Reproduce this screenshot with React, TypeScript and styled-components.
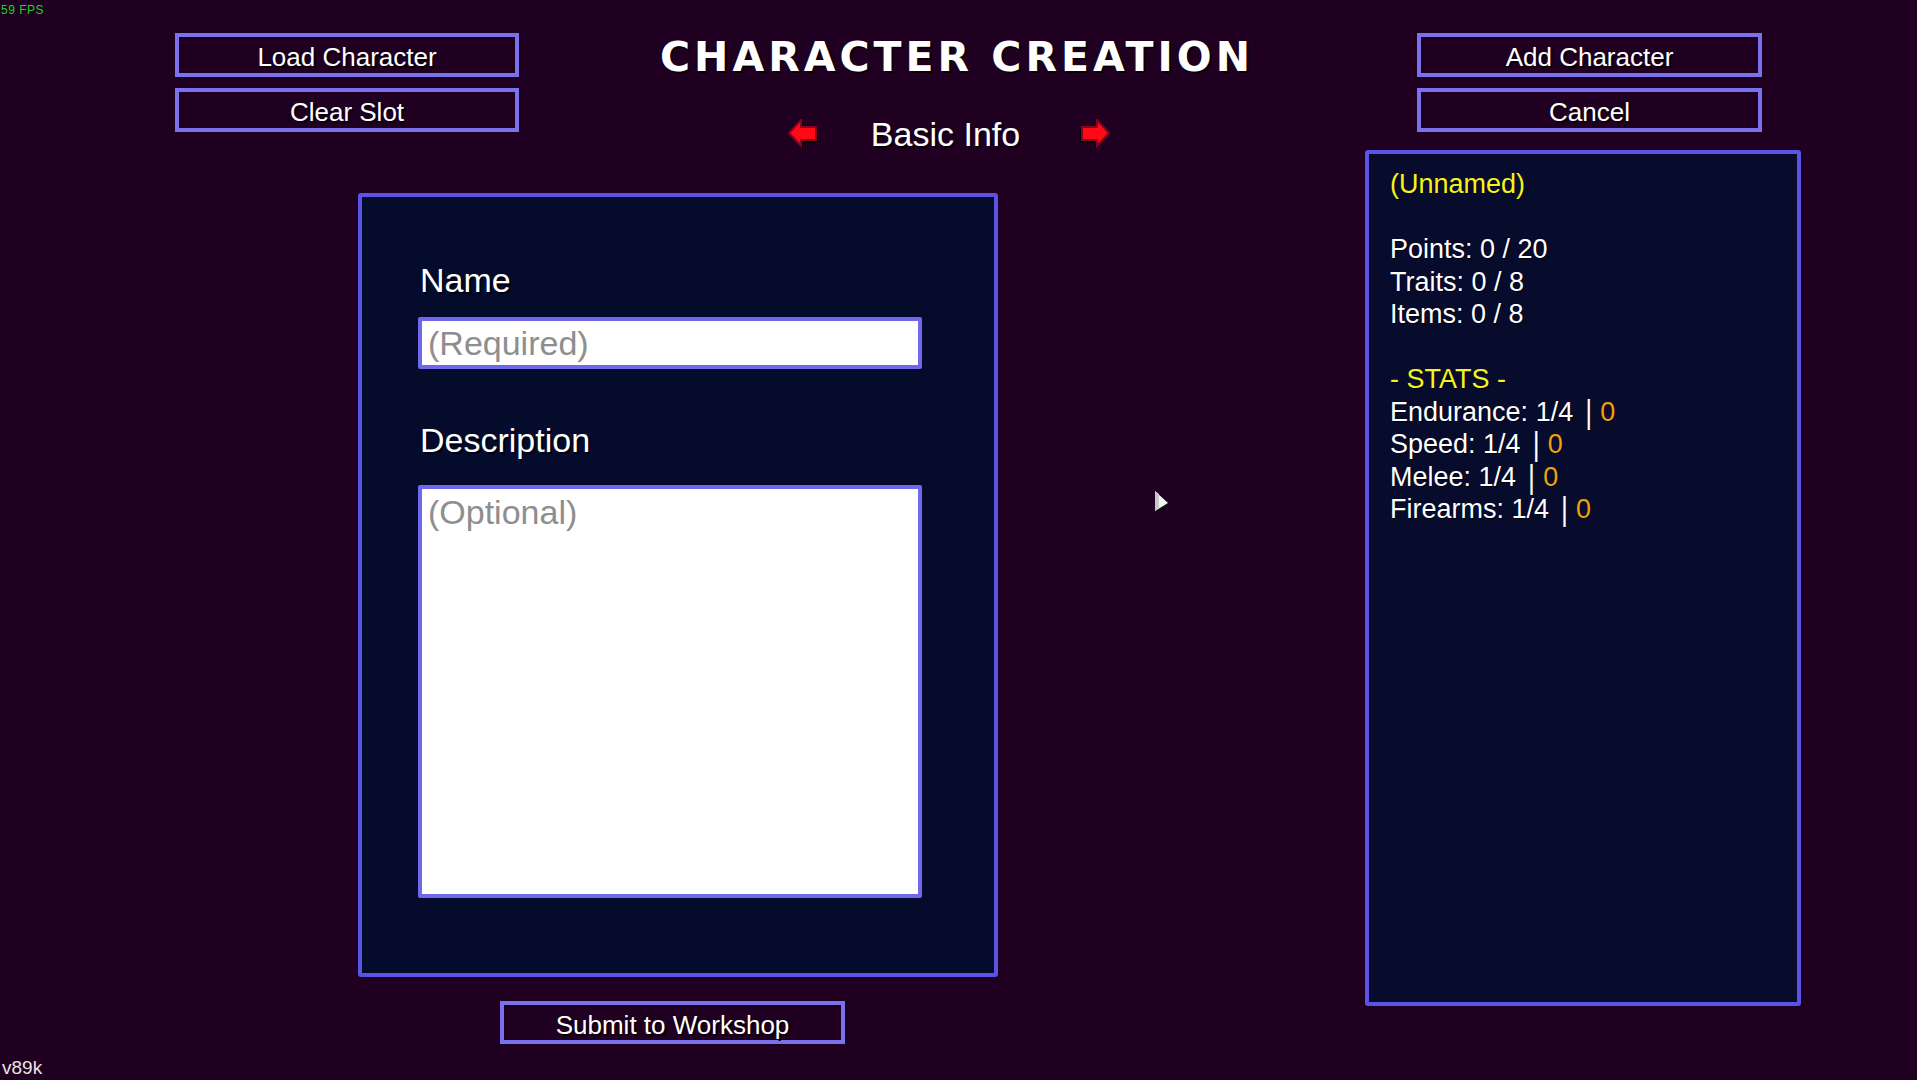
import React from "react";
import styled, { createGlobalStyle } from "styled-components";

const GlobalStyle = createGlobalStyle`
  html, body {
    margin: 0;
    padding: 0;
    background: #1f0020;
  }
  body {
    font-family: "Liberation Sans", Arial, sans-serif;
    color: #ffffff;
  }
  * {
    box-sizing: border-box;
  }
`;

const Screen = styled.div`
  position: relative;
  width: 1917px;
  height: 1080px;
  overflow: hidden;
  background: #1f0020;
  padding-top: 33px;
  display: flex;
  flex-direction: column;
`;

const Header = styled.header`
  display: grid;
  grid-template-columns: 344px 1fr 345px;
  height: 117px;
  padding: 0 155px 0 175px;
`;

const ButtonStack = styled.div`
  display: flex;
  flex-direction: column;
  gap: 11px;
`;

const PixelButton = styled.button<{ $width?: number }>`
  width: ${({ $width }) => ($width ? `${$width}px` : "100%")};
  height: ${({ $width }) => ($width ? "43px" : "44px")};
  padding: 4px 0 0;
  background: transparent;
  border: 4px solid #7a72ec;
  color: #ffffff;
  font-family: "Liberation Sans", Arial, sans-serif;
  font-size: 26px;
  line-height: 1;
  text-shadow: 2px 2px 0 #0a0008;
  cursor: pointer;
`;

const TitleColumn = styled.div`
  display: flex;
  flex-direction: column;
  align-items: center;
  padding-right: 22px;
`;

const Title = styled.h1`
  margin: 4px 0 0;
  font-family: "DejaVu Sans", "Liberation Sans", sans-serif;
  font-weight: bold;
  font-size: 41px;
  line-height: 41px;
  letter-spacing: 4px;
  color: #ffffff;
  text-shadow: 2px 2px 0 #0a0008;
  white-space: nowrap;
`;

const PageSwitcher = styled.div`
  display: flex;
  align-items: center;
  margin: 39px 16px 0 0;
`;

const PageName = styled.span`
  font-size: 34px;
  line-height: 34px;
  margin: 0 59px 0 52px;
  text-shadow: 2px 2px 0 #0a0008;
`;

const ArrowButton = styled.button`
  width: 31px;
  height: 30px;
  padding: 0;
  border: none;
  background: transparent;
  display: flex;
  cursor: pointer;
`;

const Body = styled.main`
  display: flex;
  align-items: flex-start;
  padding-left: 358px;
  padding-right: 116px;
`;

const EditorColumn = styled.div`
  display: flex;
  flex-direction: column;
  padding-top: 43px;
`;

const EditorPanel = styled.section`
  width: 640px;
  height: 784px;
  padding: 63px 56px 0;
  background: #050c2b;
  border: 4px solid #5b52e6;
  border-radius: 3px;
  display: flex;
  flex-direction: column;
`;

const FieldLabel = styled.label<{ $gap?: number }>`
  display: block;
  margin-top: ${({ $gap }) => $gap ?? 0}px;
  padding-left: 2px;
  font-size: 34px;
  line-height: 40px;
  color: #ffffff;
  text-shadow: 2px 2px 0 #000010;
`;

const fieldStyles = `
  width: 504px;
  background: #ffffff;
  border: 4px solid #6f68ea;
  border-radius: 2px;
  color: #202020;
  font-family: "Liberation Sans", Arial, sans-serif;
  font-size: 34px;
  outline: none;
  &::placeholder {
    color: #8e8e8e;
  }
`;

const NameInput = styled.input`
  ${fieldStyles}
  height: 52px;
  margin-top: 17px;
  padding: 0 6px;
`;

const DescriptionInput = styled.textarea`
  ${fieldStyles}
  height: 413px;
  margin-top: 25px;
  padding: 3px 6px;
  line-height: 40px;
  resize: none;
`;

const SubmitRow = styled.div`
  margin: 24px 0 0 142px;
`;

const SummaryPanel = styled.aside`
  margin-left: auto;
  width: 436px;
  height: 856px;
  padding: 14px 21px;
  background: #070c2d;
  border: 4px solid #5b52e6;
  border-radius: 3px;
  font-size: 27px;
  line-height: 32.5px;
`;

const SummaryLine = styled.div<{ $tone?: "yellow" | "white" }>`
  height: 32.5px;
  white-space: pre;
  color: ${({ $tone }) => ($tone === "yellow" ? "#f6f31c" : "#ffffff")};
  text-shadow: 1px 1px 0 #000010;
`;

const StatValue = styled.span`
  color: #f0a010;
`;

const Separator = styled.span`
  display: inline-block;
  transform: scaleY(1.25);
  margin: 0 8px 0 12px;
`;

const FpsCounter = styled.div`
  position: absolute;
  top: 3px;
  left: 1px;
  font-size: 12px;
  letter-spacing: 0.5px;
  color: #22d022;
`;

const VersionTag = styled.div`
  position: absolute;
  left: 2px;
  bottom: 3px;
  font-size: 19px;
  line-height: 19px;
  color: #e4e4e4;
`;

const Pointer = styled.svg`
  position: absolute;
  left: 1154px;
  top: 490px;
`;

const Arrow: React.FC<{ dir: "left" | "right" }> = ({ dir }) => (
  <svg width="31" height="30" viewBox="0 0 31 30">
    <g transform={dir === "right" ? "translate(31 0) scale(-1 1)" : undefined}>
      <polygon
        points="3,16 15,3 15,10 30,10 30,24 15,24 15,30"
        fill="#05000a"
      />
      <polygon
        points="1,14 13,1 13,8 28,8 28,21 13,21 13,27"
        fill="#ff0a14"
        stroke="#8a0020"
        strokeWidth="2"
        strokeLinejoin="miter"
      />
    </g>
  </svg>
);

const stats = [
  { name: "Endurance", value: "1/4", bonus: 0 },
  { name: "Speed", value: "1/4", bonus: 0 },
  { name: "Melee", value: "1/4", bonus: 0 },
  { name: "Firearms", value: "1/4", bonus: 0 },
];

export default function App() {
  return (
    <>
      <GlobalStyle />
      <Screen>
        <FpsCounter>59 FPS</FpsCounter>

        <Header>
          <ButtonStack>
            <PixelButton>Load Character</PixelButton>
            <PixelButton>Clear Slot</PixelButton>
          </ButtonStack>

          <TitleColumn>
            <Title>CHARACTER CREATION</Title>
            <PageSwitcher>
              <ArrowButton aria-label="Previous page">
                <Arrow dir="left" />
              </ArrowButton>
              <PageName>Basic Info</PageName>
              <ArrowButton aria-label="Next page">
                <Arrow dir="right" />
              </ArrowButton>
            </PageSwitcher>
          </TitleColumn>

          <ButtonStack>
            <PixelButton>Add Character</PixelButton>
            <PixelButton>Cancel</PixelButton>
          </ButtonStack>
        </Header>

        <Body>
          <EditorColumn>
            <EditorPanel>
              <FieldLabel htmlFor="char-name">Name</FieldLabel>
              <NameInput id="char-name" placeholder="(Required)" />
              <FieldLabel htmlFor="char-desc" $gap={51}>
                Description
              </FieldLabel>
              <DescriptionInput id="char-desc" placeholder="(Optional)" />
            </EditorPanel>
            <SubmitRow>
              <PixelButton $width={345}>Submit to Workshop</PixelButton>
            </SubmitRow>
          </EditorColumn>

          <SummaryPanel>
            <SummaryLine $tone="yellow">(Unnamed)</SummaryLine>
            <SummaryLine />
            <SummaryLine>Points: 0 / 20</SummaryLine>
            <SummaryLine>Traits: 0 / 8</SummaryLine>
            <SummaryLine>Items: 0 / 8</SummaryLine>
            <SummaryLine />
            <SummaryLine $tone="yellow">- STATS -</SummaryLine>
            {stats.map((s) => (
              <SummaryLine key={s.name}>
                {s.name}: {s.value}
                <Separator>|</Separator>
                <StatValue>{s.bonus}</StatValue>
              </SummaryLine>
            ))}
          </SummaryPanel>
        </Body>

        <Pointer width="18" height="24" viewBox="0 0 18 24">
          <polygon points="1,1 1,23 16,14" fill="#101010" />
          <polygon points="1,1 1,21 14,13" fill="#f4f4f4" />
          <polygon points="1,1 1,21 5,18 5,4" fill="#c8c8c8" />
        </Pointer>

        <VersionTag>v89k</VersionTag>
      </Screen>
    </>
  );
}
